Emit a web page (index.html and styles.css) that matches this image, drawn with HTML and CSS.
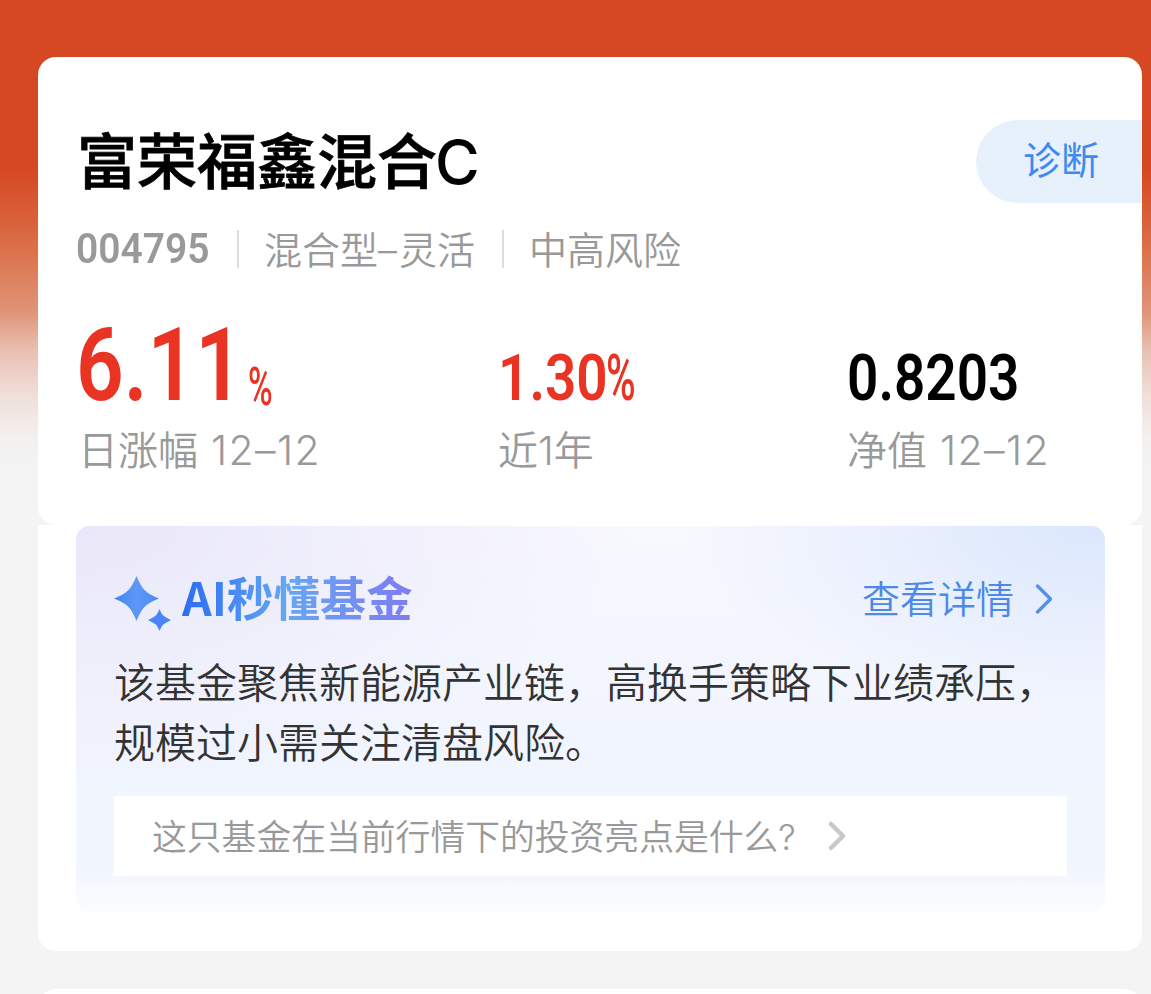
FILE: index.html
```html
<!DOCTYPE html>
<html lang="zh-CN">
<head>
  <meta charset="UTF-8">
  <meta name="viewport" content="width=device-width, initial-scale=1.0">
  <title>富荣福鑫混合C</title>
  <link rel="stylesheet" href="styles.css">
</head>
<body>
  <div class="page">
    <div class="card fund-card">
      <div class="fund-header">
        <h1 class="fund-name">富荣福鑫混合<span class="fund-class">C</span></h1>
        <a class="diagnose" href="#">诊断</a>
      </div>
      <div class="fund-tags">
        <span class="fund-code"><span class="num">004795</span></span>
        <span class="tag">混合型<span class="dash">–</span>灵活</span>
        <span class="tag">中高风险</span>
      </div>
      <div class="stats">
        <div class="stat">
          <div class="stat-value up main"><span class="num">6.11</span><span class="unit">%</span></div>
          <div class="stat-label">日涨幅 <span class="latin date">12–12</span></div>
        </div>
        <div class="stat">
          <div class="stat-value up"><span class="num">1.30</span><span class="percent">%</span></div>
          <div class="stat-label year">近<span class="latin">1</span>年</div>
        </div>
        <div class="stat">
          <div class="stat-value"><span class="num">0.8203</span></div>
          <div class="stat-label">净值 <span class="latin date">12–12</span></div>
        </div>
      </div>
    </div>

    <div class="card ai-card">
      <div class="ai-panel">
        <div class="ai-header">
          <svg class="ai-icon" width="58" height="56" viewBox="0 0 58 56">
            <defs>
              <linearGradient id="star" x1="0" y1="0" x2="1" y2="0">
                <stop offset="0" stop-color="#4285f0"/>
                <stop offset="0.5" stop-color="#5c98f5"/>
                <stop offset="1" stop-color="#4b8af4"/>
              </linearGradient>
            </defs>
            <path fill="url(#star)" d="M22.500 0Q27 11 31 14.500Q35 18.500 45 22.500Q35 26.500 31 30.500Q27 34 22.500 45Q18 34 14 30.500Q10 26.500 0 22.500Q10 18.500 14 14.500Q18 11 22.500 0Z"/>
            <path fill="#4886f7" d="M45.500 33Q48 39 50 40Q51 41 57 44Q51 47 50 48Q48 49 45.500 55Q43 49 41 48Q40 47 34 44Q40 41 41 40Q43 39 45.500 33Z"/>
          </svg>
          <h2 class="ai-title">AI秒懂基金</h2>
          <a class="ai-more" href="#"><span>查看详情</span>
            <svg width="18" height="32" viewBox="0 0 18 32"><path d="M2.500 3L15.500 16L2.500 29" fill="none" stroke="#558fe8" stroke-width="3.400" stroke-linecap="round" stroke-linejoin="round"/></svg>
          </a>
        </div>
        <p class="ai-text">该基金聚焦新能源产业链，高换手策略下业绩承压，<br>规模过小需关注清盘风险。</p>
        <a class="question" href="#">
          <span>这只基金在当前行情下的投资亮点是什么<span class="latin">?</span></span>
          <svg width="20" height="32" viewBox="0 0 20 32"><path d="M4 4L16 16L4 28" fill="none" stroke="#c8c8c8" stroke-width="4.500" stroke-linecap="round" stroke-linejoin="round"/></svg>
        </a>
      </div>
    </div>

    <div class="card next-card"></div>
  </div>
</body>
</html>
```
FILE: styles.css
```css
* {
  box-sizing: border-box;
}

body {
  margin: 0;
  height: 994px;
  overflow: hidden;
  font-family: 'Noto Sans CJK SC', sans-serif;
  font-weight: 350;
  color: #000;
  background: #f4f4f4 linear-gradient(#d64823 0, #d64823 170px, #da6940 235px, #e09478 312px, #e9bfb2 350px, #f0dfda 395px, #f3f1f0 440px, #f4f4f4 475px) no-repeat;
}

h1, h2, p {
  margin: 0;
}

a {
  text-decoration: none;
}

.page {
  padding: 57px 9px 0 38px;
}

.card {
  background: #fff;
}

.fund-card {
  height: 468px;
  padding-top: 63px;
  border-radius: 18px;
}

.fund-header {
  display: flex;
  justify-content: space-between;
  align-items: center;
  height: 83px;
  padding-left: 39px;
}

.fund-name {
  margin-top: -3px;
  font-size: 60px;
  line-height: 60px;
  font-weight: 500;
  -webkit-text-stroke: 0.8px #000;
}

.fund-class {
  font-family: 'Inter', sans-serif;
  font-size: 61px;
  font-weight: 500;
  margin-left: -2px;
  -webkit-text-stroke: 0;
}

.diagnose {
  width: 166px;
  height: 83px;
  padding-left: 47px;
  border-radius: 42px 0 0 42px;
  background: #e7f1fc;
  color: #3f8af0;
  font-size: 38px;
  line-height: 76px;
  font-weight: 400;
}

.fund-tags {
  display: flex;
  align-items: center;
  height: 38px;
  margin-top: 27px;
  padding-left: 38px;
  color: #999;
  font-size: 38px;
  line-height: 35px;
}

/* 数字用窄体效果 */
.num {
  display: inline-block;
  font-family: 'Roboto', sans-serif;
  font-weight: 600;
  transform-origin: left center;
}

.fund-code {
  width: 161px;
  margin-top: -3px;
}

.fund-code .num {
  font-size: 43px;
  transform: scaleX(0.905);
}

.tag {
  height: 38px;
  padding: 0 26px 0 25px;
  border-left: 2px solid #ddd;
}

.tag + .tag {
  margin-left: 1px;
}

.dash, .latin {
  font-family: 'Inter', sans-serif;
}

.dash {
  display: inline-block;
  width: 21px;
}

.date {
  margin-left: 4px;
  font-size: 41px;
  letter-spacing: 1.4px;
}

.stats {
  display: grid;
  grid-template-columns: 420px 349px 1fr;
  margin-top: 52px;
  padding-left: 40px;
}

.stat-value {
  display: flex;
  height: 100px;
  padding-top: 32px;
  font-size: 65px;
  line-height: 52px;
}

.stat-value .num {
  transform: scaleX(0.845);
}

.stat-value.up {
  color: #e93323;
}

.stat-value.main {
  padding-top: 0;
  font-size: 102px;
  line-height: 90px;
}

.main .num {
  width: 170px;
  transform: translateX(-2px) scaleX(0.82);
}

.unit, .percent {
  font-family: 'Roboto', sans-serif;
  transform: scaleX(0.62);
  transform-origin: left center;
}

.unit {
  margin-top: 40px;
  font-size: 54px;
  line-height: 54px;
  font-weight: 500;
}

.percent {
  font-weight: 500;
  margin-left: -22px;
}

.stat-label {
  color: #999;
  font-size: 40px;
  line-height: 57px;
}

.ai-card {
  height: 426px;
  padding: 1px 37px 0 38px;
  border-radius: 0 0 18px 18px;
}

.ai-panel {
  height: 386px;
  padding: 43px 38px 0;
  border-radius: 14px;
  background:
    linear-gradient(rgba(255, 255, 255, 0) 340px, #fbfcff 380px),
    radial-gradient(ellipse 420px 190px at 100% 0, #dae7fc, rgba(218, 231, 252, 0)),
    radial-gradient(ellipse 560px 260px at 0 0, #e9e7f9, rgba(233, 231, 249, 0)),
    linear-gradient(#f8f8fe, #f1f5ff 220px, #f1f6fe);
}

.ai-header {
  display: flex;
  align-items: center;
  height: 60px;
}

.ai-icon {
  margin-top: 10px;
}

.ai-title {
  margin-left: 10px;
  margin-top: -6px;
  font-size: 46.4px;
  line-height: 60px;
  font-weight: 700;
  color: transparent;
  background: linear-gradient(90deg, #2b6df2, #65a7f2 45%, #7f7cf2);
  background-clip: text;
  -webkit-background-clip: text;
}

.ai-more {
  display: flex;
  align-items: center;
  gap: 21px;
  margin-left: auto;
  margin-right: 14px;
  color: #4c89e8;
  font-size: 38px;
  line-height: 60px;
}

.ai-more span {
  margin-top: -5px;
}

.ai-text {
  margin-top: 21px;
  color: #333;
  font-size: 41px;
  line-height: 60px;
  font-weight: 350;
  white-space: nowrap;
}

.question {
  display: flex;
  align-items: center;
  gap: 31px;
  height: 80px;
  margin-top: 26px;
  padding-left: 38px;
  background: #fff;
  color: #999;
  font-size: 34.8px;
  line-height: 80px;
}

.next-card {
  height: 44px;
  margin-top: 38px;
  border-radius: 18px;
}
```
